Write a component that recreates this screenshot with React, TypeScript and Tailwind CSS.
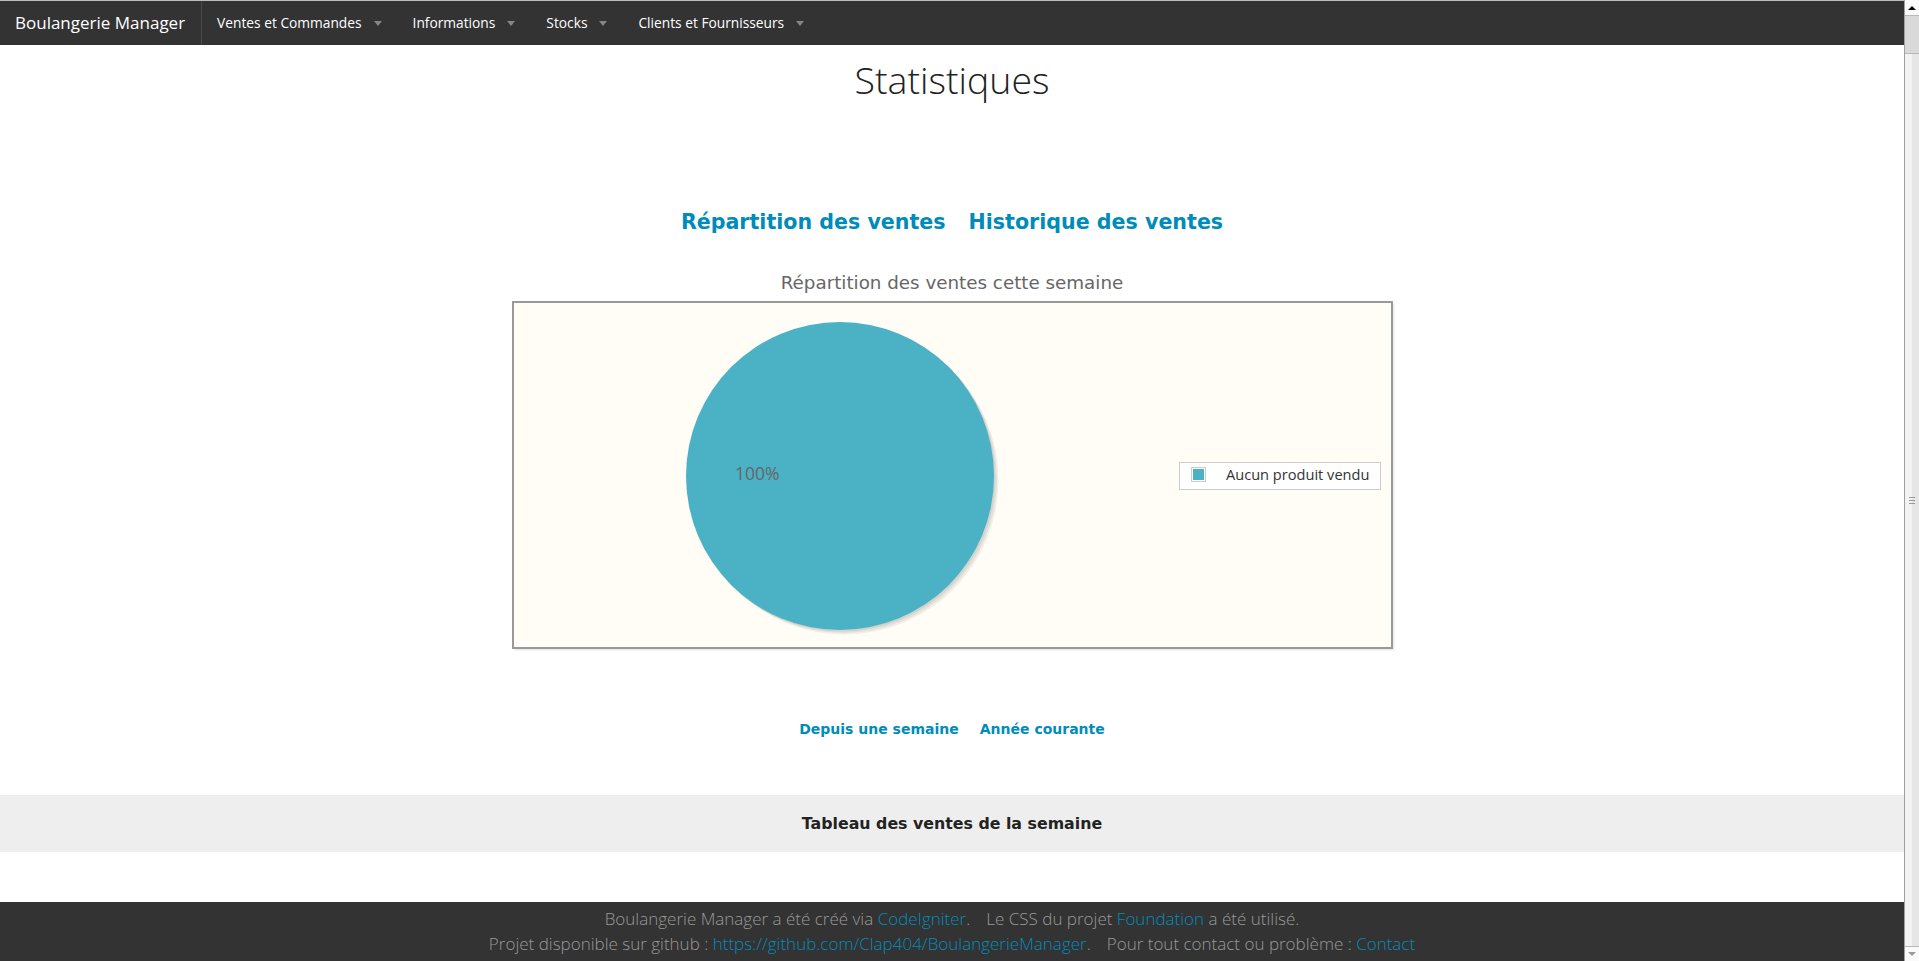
import React from "react";

const Caret = () => (
  <span className="ml-[12px] inline-block h-0 w-0 border-x-[4.5px] border-t-[5px] border-x-transparent border-t-[#858585]" />
);

const NavItem = ({ label }: { label: string }) => (
  <div className="flex h-full items-center pl-[15px] pr-[16px] text-[13.75px] text-white">
    <span>{label}</span>
    <Caret />
  </div>
);

const PieChart = () => (
  <svg width="883" height="350" viewBox="0 0 883 350" className="block">
    <rect x="2.5" y="2.5" width="880" height="347" fill="#000" opacity="0.08" />
    <rect x="1" y="1" width="879" height="346" fill="#fffdf6" stroke="#999" strokeWidth="2" />
    <circle cx="329.5" cy="176.5" r="154" fill="#000" opacity="0.06" />
    <circle cx="331" cy="178" r="154" fill="#000" opacity="0.06" />
    <circle cx="332.5" cy="179.5" r="154" fill="#000" opacity="0.06" />
    <circle cx="328" cy="175" r="154" fill="#4bb2c5" />
    <text
      x="223"
      y="179"
      fill="#666"
      fontSize="17.5"
      fontFamily="'Open Sans', sans-serif"
    >
      100%
    </text>
    <rect x="667.5" y="161.5" width="201" height="27" fill="#fff" stroke="#ccc" strokeWidth="1" />
    <rect x="679.5" y="166.5" width="14" height="14" fill="#fff" stroke="#ccc" strokeWidth="1" />
    <rect x="681" y="168" width="11" height="11" fill="#4bb2c5" />
    <text x="714" y="179" fill="#333" fontSize="14.6" fontFamily="'Open Sans', sans-serif">
      Aucun produit vendu
    </text>
  </svg>
);

const Scrollbar = () => (
  <div className="flex h-full w-[15px] shrink-0 flex-col border-l border-[#a0a0a0] bg-[#ececec]">
    <div className="flex h-[16px] items-center justify-center border-b border-[#b8b8b8] bg-[#fafafa]">
      <span className="h-0 w-0 border-x-[4px] border-b-[4px] border-x-transparent border-b-black" />
    </div>
    <div className="h-[38px] border-b border-[#b8b8b8] bg-[#d9d9d9]" />
    <div className="flex flex-1 items-center bg-[linear-gradient(to_right,#f3f3f3_50%,#e6e6e6_50%)]">
      <div className="mx-auto flex w-[6px] flex-col gap-[2px]">
        <span className="h-px bg-[#999]" />
        <span className="h-px bg-[#999]" />
        <span className="h-px bg-[#999]" />
      </div>
    </div>
    <div className="flex h-[15px] items-center justify-center border-t border-[#b8b8b8] bg-[#fafafa]">
      <span className="h-0 w-0 border-x-[4px] border-t-[4px] border-x-transparent border-t-[#9a9a9a]" />
    </div>
  </div>
);

export default function App() {
  const dejavu = "font-['DejaVu_Sans',sans-serif]";
  return (
    <div className="flex h-[961px] w-full overflow-hidden bg-white font-['Open_Sans',sans-serif]">
      <div className="flex min-w-0 flex-1 flex-col">
        <nav className="flex h-[45px] shrink-0 items-stretch border-t border-[#bdbdbd] bg-[#333]">
          <div className="flex items-center border-r border-[#4a4a4a] pl-[15px] pr-[16px] text-[17px] text-white">
            Boulangerie Manager
          </div>
          <NavItem label="Ventes et Commandes" />
          <NavItem label="Informations" />
          <NavItem label="Stocks" />
          <NavItem label="Clients et Fournisseurs" />
        </nav>

        <h1 className="mt-[13px] text-center text-[37.5px] font-light leading-[43px] text-[#222]">
          Statistiques
        </h1>

        <div className={`mt-[109px] flex justify-center gap-[23px] text-[20.6px] font-bold leading-[24px] text-[#008cba] ${dejavu}`}>
          <a>Répartition des ventes</a>
          <a>Historique des ventes</a>
        </div>

        <div className={`mt-[38px] text-center text-[18.3px] leading-[22px] text-[#666] ${dejavu}`}>
          Répartition des ventes cette semaine
        </div>

        <div className="mt-[7px] flex justify-center pl-[2px]">
          <PieChart />
        </div>

        <div className={`mt-[69px] flex justify-center gap-[21px] text-[14px] font-bold leading-[18px] text-[#008cba] ${dejavu}`}>
          <a>Depuis une semaine</a>
          <a>Année courante</a>
        </div>

        <div className={`mt-[57px] flex h-[57px] shrink-0 items-center justify-center bg-[#eee] text-[15.8px] font-bold text-[#222] ${dejavu}`}>
          Tableau des ventes de la semaine
        </div>

        <div className="h-[50px] shrink-0" />

        <footer className="flex-1 bg-[#333] pt-[4px] text-center text-[17px] font-light leading-[25px] text-[#999]">
          <p>
            Boulangerie Manager a été créé via <a className="text-[#008cba]">CodeIgniter</a>.
            <span className="ml-[16px]">Le CSS du projet </span>
            <a className="text-[#008cba]">Foundation</a> a été utilisé.
          </p>
          <p>
            Projet disponible sur github :{" "}
            <a className="text-[#008cba]">https://github.com/Clap404/BoulangerieManager</a>.
            <span className="ml-[16px]">Pour tout contact ou problème : </span>
            <a className="text-[#008cba]">Contact</a>
          </p>
        </footer>
      </div>
      <Scrollbar />
    </div>
  );
}
